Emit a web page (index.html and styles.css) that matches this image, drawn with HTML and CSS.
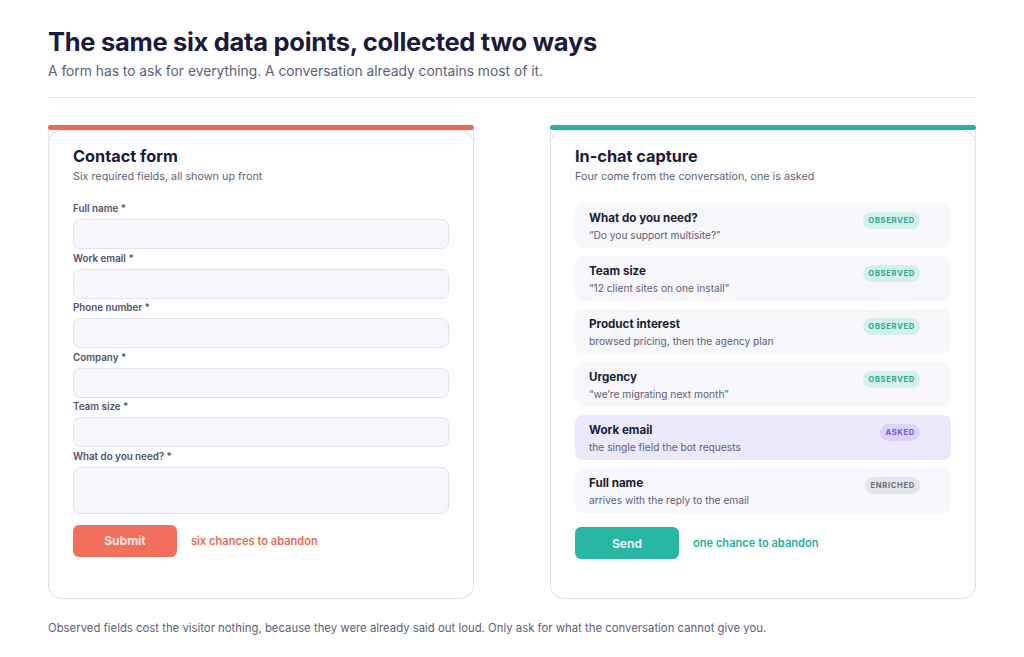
FILE: index.html
```html
<!DOCTYPE html>
<html lang="en">
<head>
<meta charset="utf-8">
<title>The same six data points, collected two ways</title>
<link rel="stylesheet" href="styles.css">
</head>
<body>
<main class="page">
  <header class="intro">
    <h1 class="headline">The same six data points, collected two ways</h1>
    <p class="lede">A form has to ask for everything. A conversation already contains most of it.</p>
  </header>

  <section class="compare">
    <div class="panel panel-form">
      <div class="panel-bar"></div>
      <div class="panel-body">
        <h2 class="panel-title">Contact form</h2>
        <p class="panel-sub">Six required fields, all shown up front</p>
        <div class="fields">
          <div class="field"><span class="label">Full name *</span><div class="input"></div></div>
          <div class="field"><span class="label">Work email *</span><div class="input"></div></div>
          <div class="field"><span class="label">Phone number *</span><div class="input"></div></div>
          <div class="field"><span class="label">Company *</span><div class="input"></div></div>
          <div class="field"><span class="label">Team size *</span><div class="input"></div></div>
          <div class="field"><span class="label">What do you need? *</span><div class="input input-tall"></div></div>
        </div>
        <div class="actions">
          <span class="btn btn-coral">Submit</span>
          <span class="note note-coral">six chances to abandon</span>
        </div>
      </div>
    </div>

    <div class="panel panel-chat">
      <div class="panel-bar"></div>
      <div class="panel-body">
        <h2 class="panel-title">In-chat capture</h2>
        <p class="panel-sub">Four come from the conversation, one is asked</p>
        <div class="rows">
          <div class="row">
            <div class="row-text"><span class="row-title">What do you need?</span><span class="row-sub">“Do you support multisite?”</span></div>
            <span class="badge badge-observed">OBSERVED</span>
          </div>
          <div class="row">
            <div class="row-text"><span class="row-title">Team size</span><span class="row-sub">“12 client sites on one install”</span></div>
            <span class="badge badge-observed">OBSERVED</span>
          </div>
          <div class="row">
            <div class="row-text"><span class="row-title">Product interest</span><span class="row-sub">browsed pricing, then the agency plan</span></div>
            <span class="badge badge-observed">OBSERVED</span>
          </div>
          <div class="row">
            <div class="row-text"><span class="row-title">Urgency</span><span class="row-sub">“we’re migrating next month”</span></div>
            <span class="badge badge-observed">OBSERVED</span>
          </div>
          <div class="row row-asked">
            <div class="row-text"><span class="row-title">Work email</span><span class="row-sub">the single field the bot requests</span></div>
            <span class="badge badge-asked">ASKED</span>
          </div>
          <div class="row">
            <div class="row-text"><span class="row-title">Full name</span><span class="row-sub">arrives with the reply to the email</span></div>
            <span class="badge badge-enriched">ENRICHED</span>
          </div>
        </div>
        <div class="actions actions-chat">
          <span class="btn btn-teal">Send</span>
          <span class="note note-teal">one chance to abandon</span>
        </div>
      </div>
    </div>
  </section>

  <p class="footnote">Observed fields cost the visitor nothing, because they were already said out loud. Only ask for what the conversation cannot give you.</p>
</main>
</body>
</html>
```

FILE: styles.css
```css
* { box-sizing: border-box; }

html, body {
  margin: 0;
  padding: 0;
  background: #ffffff;
}

body {
  font-family: Inter, "Noto Sans", "Liberation Sans", sans-serif;
  color: #1b1b3a;
}

.page {
  padding: 26px 48px 0 48px;
}

.intro {
  padding-bottom: 16px;
  border-bottom: 1px solid #e4e5ec;
}

.headline {
  margin: 0;
  font-size: 25.5px;
  line-height: 32px;
  font-weight: 700;
  letter-spacing: -0.3px;
  color: #1a1a3c;
}

.lede {
  margin: 4px 0 0 0;
  font-size: 13.8px;
  line-height: 19px;
  color: #5d6079;
}

.compare {
  display: grid;
  grid-template-columns: 426px 426px;
  justify-content: space-between;
  margin-top: 27px;
}

.panel {
  display: flex;
  flex-direction: column;
}

.panel-bar {
  height: 5px;
  border-radius: 3px;
}

.panel-form .panel-bar { background: #ef6a55; }
.panel-chat .panel-bar { background: #1fb3a0; }

.panel-body {
  border: 1px solid #e2e3ea;
  border-top: none;
  border-radius: 0 0 14px 14px;
  height: 469px;
  padding: 15px 24px 0 24px;
  position: relative;
}

.panel-body::before {
  content: "";
  position: absolute;
  left: -1px;
  right: -1px;
  top: 0;
  height: 14px;
  border: 1px solid #e2e3ea;
  border-bottom: none;
  border-radius: 14px 14px 0 0;
}

.panel-title {
  margin: 0;
  font-size: 16.3px;
  line-height: 22px;
  font-weight: 700;
  color: #1a1a3c;
}

.panel-sub {
  margin: 2px 0 0 0;
  font-size: 10.8px;
  line-height: 16px;
  color: #5f6279;
}

.fields {
  margin-top: 17px;
  display: flex;
  flex-direction: column;
  gap: 2.5px;
}

.field {
  display: flex;
  flex-direction: column;
  gap: 3px;
}

.label {
  font-size: 9.8px;
  line-height: 14px;
  font-weight: 600;
  color: #4f5269;
}

.input {
  height: 30px;
  background: #f6f6fc;
  border: 1px solid #e3e3f0;
  border-radius: 7px;
}

.input-tall {
  height: 47px;
}

.actions {
  margin-top: 11px;
  display: flex;
  align-items: center;
  gap: 14px;
}

.actions-chat {
  margin-top: 14px;
}

.btn {
  display: inline-flex;
  align-items: center;
  justify-content: center;
  width: 104px;
  height: 32px;
  border-radius: 6px;
  color: #ffffff;
  font-size: 12px;
  font-weight: 700;
}

.btn-coral { background: #f2705b; color: #fde8e3; }
.btn-teal { background: #28b6a4; color: #e3f7f3; }

.note {
  font-size: 11.1px;
  font-weight: 600;
}

.note-coral { color: #ec6a54; }
.note-teal { color: #22b39f; }

.rows {
  margin-top: 18px;
  display: flex;
  flex-direction: column;
  gap: 8px;
  width: 376px;
}

.row {
  display: flex;
  justify-content: space-between;
  align-items: flex-start;
  height: 45px;
  padding: 7px 31px 0 14px;
  background: #f7f7fc;
  border-radius: 8px;
}

.row-asked {
  background: #ece9fd;
}

.row-text {
  display: flex;
  flex-direction: column;
}

.row-title {
  font-size: 11.6px;
  line-height: 16px;
  font-weight: 700;
  color: #1b1b34;
}

.row-sub {
  margin-top: 1px;
  font-size: 10.2px;
  line-height: 16px;
  color: #5d6077;
}

.badge {
  margin-top: 2px;
  height: 17px;
  padding: 0 5px;
  border-radius: 9px;
  font-size: 7.6px;
  line-height: 17px;
  font-weight: 700;
  letter-spacing: 0.7px;
}

.badge-observed { background: #d3f1eb; color: #2aa893; }
.badge-asked { background: #dcd2fb; color: #7852e0; }
.badge-enriched { background: #e4e4ea; color: #6a6d80; }

.footnote {
  margin: 21px 0 0 0;
  font-size: 11.35px;
  line-height: 16px;
  color: #5d6079;
}
```
